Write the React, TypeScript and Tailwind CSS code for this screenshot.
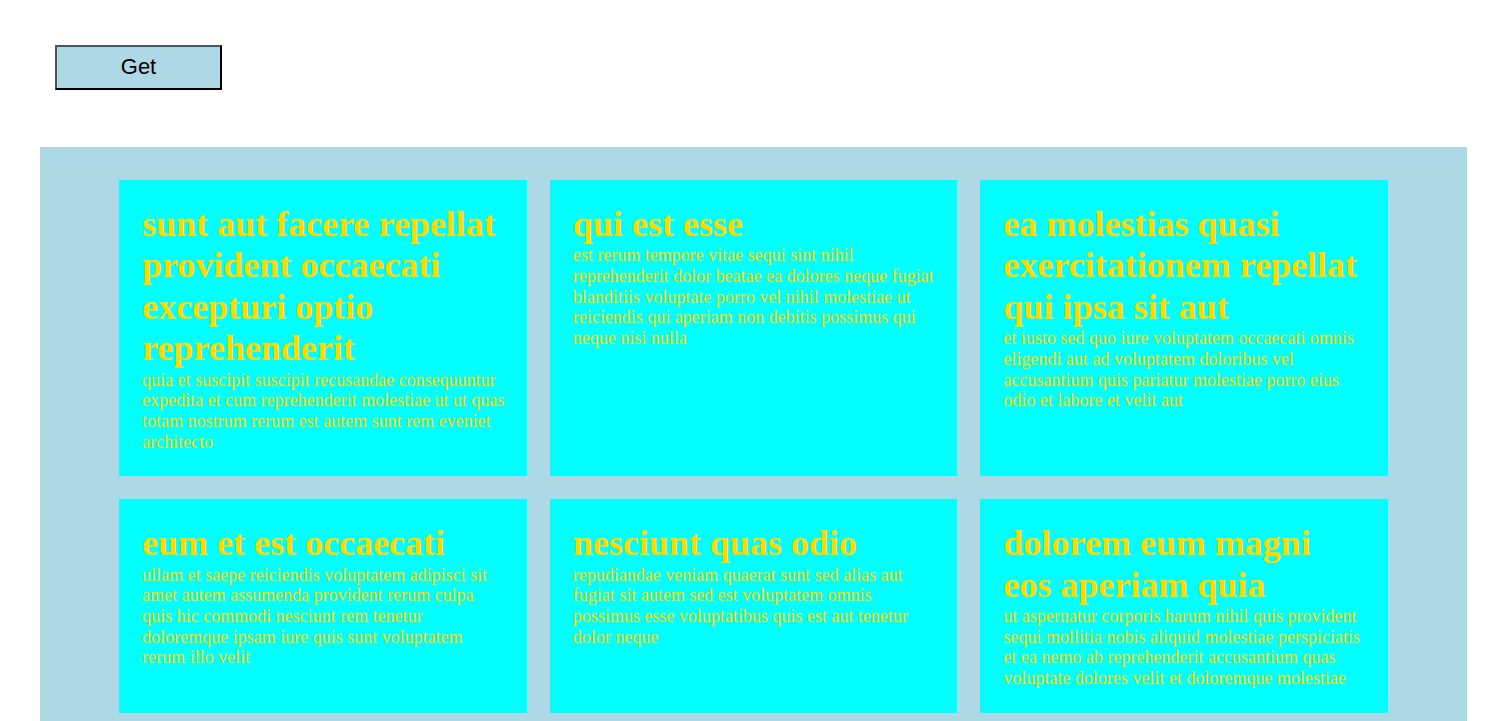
import {useState} from "react"

interface IPost {
    title: string
    body: string
}

const posts: IPost[] = [
    {
        title: "sunt aut facere repellat provident occaecati excepturi optio reprehenderit",
        body: "quia et suscipit suscipit recusandae consequuntur expedita et cum reprehenderit molestiae ut ut quas totam nostrum rerum est autem sunt rem eveniet architecto",
    },
    {
        title: "qui est esse",
        body: "est rerum tempore vitae sequi sint nihil reprehenderit dolor beatae ea dolores neque fugiat blanditiis voluptate porro vel nihil molestiae ut reiciendis qui aperiam non debitis possimus qui neque nisi nulla",
    },
    {
        title: "ea molestias quasi exercitationem repellat qui ipsa sit aut",
        body: "et iusto sed quo iure voluptatem occaecati omnis eligendi aut ad voluptatem doloribus vel accusantium quis pariatur molestiae porro eius odio et labore et velit aut",
    },
    {
        title: "eum et est occaecati",
        body: "ullam et saepe reiciendis voluptatem adipisci sit amet autem assumenda provident rerum culpa quis hic commodi nesciunt rem tenetur doloremque ipsam iure quis sunt voluptatem rerum illo velit",
    },
    {
        title: "nesciunt quas odio",
        body: "repudiandae veniam quaerat sunt sed alias aut fugiat sit autem sed est voluptatem omnis possimus esse voluptatibus quis est aut tenetur dolor neque",
    },
    {
        title: "dolorem eum magni eos aperiam quia",
        body: "ut aspernatur corporis harum nihil quis provident sequi mollitia nobis aliquid molestiae perspiciatis et ea nemo ab reprehenderit accusantium quas voluptate dolores velit et doloremque molestiae",
    },
]

export default function App() {
    const [data] = useState<IPost[]>(posts)

    return (
        <div className="bg-white min-h-screen" style={{fontFamily: '"Liberation Serif", serif'}}>
            <div className="pt-[45px] pl-[55px]">
                <button
                    className="w-[167px] h-[45px] bg-[#add8e6] border-2 border-t-[#4b5560] border-l-[#4b5560] border-r-black border-b-black text-[22px] leading-none text-black pb-[2px]"
                    style={{fontFamily: '"Liberation Sans", Arial, sans-serif'}}
                >
                    Get
                </button>
            </div>
            <div className="mt-[57px] ml-[40px] w-[1427px] bg-[#add8e6] px-[79px] pt-[33px] pb-[33px]">
                <div className="grid grid-cols-3 gap-[23px]">
                    {data.map((post, index) => (
                        <div key={index} className="bg-[#00ffff] pl-[23px] pr-[20px] py-6 text-[#ffd700]">
                            <h2 className="text-[36px] font-bold leading-[1.15] pr-[5px]">{post.title}</h2>
                            <p className="text-[18px] leading-[1.15]">{post.body}</p>
                        </div>
                    ))}
                </div>
            </div>
        </div>
    )
}
